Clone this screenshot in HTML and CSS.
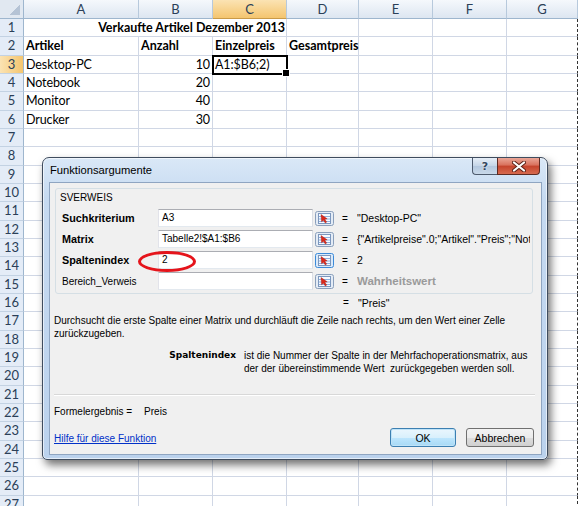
FILE: index.html
```html
<!DOCTYPE html>
<html lang="de">
<head>
<meta charset="utf-8">
<title>Funktionsargumente</title>
<link rel="stylesheet" href="styles.css">
</head>
<body>
<div class="sheet">
  <div class="corner"></div><div class="ch">A</div><div class="ch">B</div><div class="ch sel">C</div><div class="ch">D</div><div class="ch">E</div><div class="ch">F</div><div class="ch">G</div>

  <div class="rh">1</div><div class="c span3 r b">Verkaufte Artikel Dezember 2013</div><div class="c"></div><div class="c"></div><div class="c"></div><div class="c pb"></div>
  <div class="rh">2</div><div class="c b">Artikel</div><div class="c b">Anzahl</div><div class="c b">Einzelpreis</div><div class="c b">Gesamtpreis</div><div class="c"></div><div class="c"></div><div class="c pb"></div>
  <div class="rh sel">3</div><div class="c">Desktop-PC</div><div class="c r">10</div><div class="c active">A1:$B6;2)</div><div class="c"></div><div class="c"></div><div class="c"></div><div class="c pb"></div>
  <div class="rh">4</div><div class="c">Notebook</div><div class="c r">20</div><div class="c"></div><div class="c"></div><div class="c"></div><div class="c"></div><div class="c pb"></div>
  <div class="rh">5</div><div class="c">Monitor</div><div class="c r">40</div><div class="c"></div><div class="c"></div><div class="c"></div><div class="c"></div><div class="c pb"></div>
  <div class="rh">6</div><div class="c">Drucker</div><div class="c r">30</div><div class="c"></div><div class="c"></div><div class="c"></div><div class="c"></div><div class="c pb"></div>
  <div class="rh">7</div><div class="c"></div><div class="c"></div><div class="c"></div><div class="c"></div><div class="c"></div><div class="c"></div><div class="c pb"></div>
  <div class="rh">8</div><div class="c"></div><div class="c"></div><div class="c"></div><div class="c"></div><div class="c"></div><div class="c"></div><div class="c pb"></div>
  <div class="rh">9</div><div class="c"></div><div class="c"></div><div class="c"></div><div class="c"></div><div class="c"></div><div class="c"></div><div class="c pb"></div>
  <div class="rh">10</div><div class="c"></div><div class="c"></div><div class="c"></div><div class="c"></div><div class="c"></div><div class="c"></div><div class="c pb"></div>
  <div class="rh">11</div><div class="c"></div><div class="c"></div><div class="c"></div><div class="c"></div><div class="c"></div><div class="c"></div><div class="c pb"></div>
  <div class="rh">12</div><div class="c"></div><div class="c"></div><div class="c"></div><div class="c"></div><div class="c"></div><div class="c"></div><div class="c pb"></div>
  <div class="rh">13</div><div class="c"></div><div class="c"></div><div class="c"></div><div class="c"></div><div class="c"></div><div class="c"></div><div class="c pb"></div>
  <div class="rh">14</div><div class="c"></div><div class="c"></div><div class="c"></div><div class="c"></div><div class="c"></div><div class="c"></div><div class="c pb"></div>
  <div class="rh">15</div><div class="c"></div><div class="c"></div><div class="c"></div><div class="c"></div><div class="c"></div><div class="c"></div><div class="c pb"></div>
  <div class="rh">16</div><div class="c"></div><div class="c"></div><div class="c"></div><div class="c"></div><div class="c"></div><div class="c"></div><div class="c pb"></div>
  <div class="rh">17</div><div class="c"></div><div class="c"></div><div class="c"></div><div class="c"></div><div class="c"></div><div class="c"></div><div class="c pb"></div>
  <div class="rh">18</div><div class="c"></div><div class="c"></div><div class="c"></div><div class="c"></div><div class="c"></div><div class="c"></div><div class="c pb"></div>
  <div class="rh">19</div><div class="c"></div><div class="c"></div><div class="c"></div><div class="c"></div><div class="c"></div><div class="c"></div><div class="c pb"></div>
  <div class="rh">20</div><div class="c"></div><div class="c"></div><div class="c"></div><div class="c"></div><div class="c"></div><div class="c"></div><div class="c pb"></div>
  <div class="rh">21</div><div class="c"></div><div class="c"></div><div class="c"></div><div class="c"></div><div class="c"></div><div class="c"></div><div class="c pb"></div>
  <div class="rh">22</div><div class="c"></div><div class="c"></div><div class="c"></div><div class="c"></div><div class="c"></div><div class="c"></div><div class="c pb"></div>
  <div class="rh">23</div><div class="c"></div><div class="c"></div><div class="c"></div><div class="c"></div><div class="c"></div><div class="c"></div><div class="c pb"></div>
  <div class="rh">24</div><div class="c"></div><div class="c"></div><div class="c"></div><div class="c"></div><div class="c"></div><div class="c"></div><div class="c pb"></div>
  <div class="rh">25</div><div class="c"></div><div class="c"></div><div class="c"></div><div class="c"></div><div class="c"></div><div class="c"></div><div class="c pb"></div>
  <div class="rh">26</div><div class="c"></div><div class="c"></div><div class="c"></div><div class="c"></div><div class="c"></div><div class="c"></div><div class="c pb"></div>
  <div class="rh">27</div><div class="c"></div><div class="c"></div><div class="c"></div><div class="c"></div><div class="c"></div><div class="c"></div><div class="c pb"></div>
</div>

<div class="dialog">
  <div class="titlebar">
    <span class="title">Funktionsargumente</span>
    <div class="capbtns">
      <span class="cap help">?</span>
      <span class="cap close"><svg width="14" height="11" viewBox="0 0 14 11"><path d="M2 1.5L12 9.5M12 1.5L2 9.5" stroke="#5a2118" stroke-width="4" stroke-linecap="round"/><path d="M2 1.5L12 9.5M12 1.5L2 9.5" stroke="#fff" stroke-width="2.2" stroke-linecap="round"/></svg></span>
    </div>
  </div>
  <div class="client">
    <div class="group">
      <div class="gtitle">SVERWEIS</div>
      <div class="arg">
        <span class="alabel b">Suchkriterium</span>
        <span class="input">A3</span>
        <span class="refbtn"><svg width="19" height="15" viewBox="0 0 19 15"><rect x="0.5" y="0.5" width="18" height="14" rx="2" fill="#e4ecf6" stroke="#8a9fbb"/><rect x="3.5" y="2.5" width="12" height="10" fill="#f7faff" stroke="#7c97bd"/><path d="M4 5.5h11M4 8h11M4 10.5h11" stroke="#8fb0dc"/><path d="M6 3.5l6.2 4.3-2.4.5 1.9 2.8-1.4.9-1.9-2.8-1.8 1.5z" fill="#db2a1c" stroke="#a01810" stroke-width="0.4"/></svg></span>
        <span class="eq">=</span>
        <span class="val">"Desktop-PC"</span>
      </div>
      <div class="arg">
        <span class="alabel b">Matrix</span>
        <span class="input">Tabelle2!$A1:$B6</span>
        <span class="refbtn"><svg width="19" height="15" viewBox="0 0 19 15"><rect x="0.5" y="0.5" width="18" height="14" rx="2" fill="#e4ecf6" stroke="#8a9fbb"/><rect x="3.5" y="2.5" width="12" height="10" fill="#f7faff" stroke="#7c97bd"/><path d="M4 5.5h11M4 8h11M4 10.5h11" stroke="#8fb0dc"/><path d="M6 3.5l6.2 4.3-2.4.5 1.9 2.8-1.4.9-1.9-2.8-1.8 1.5z" fill="#db2a1c" stroke="#a01810" stroke-width="0.4"/></svg></span>
        <span class="eq">=</span>
        <span class="val">{"Artikelpreise".0;"Artikel"."Preis";"Notebook".300;"Monitor".150}</span>
      </div>
      <div class="arg">
        <span class="alabel b">Spaltenindex</span>
        <span class="input">2</span>
        <span class="refbtn"><svg width="19" height="15" viewBox="0 0 19 15"><rect x="0.5" y="0.5" width="18" height="14" rx="2" fill="#d9eafb" stroke="#3c8ad8"/><rect x="3.5" y="2.5" width="12" height="10" fill="#f7faff" stroke="#7c97bd"/><path d="M4 5.5h11M4 8h11M4 10.5h11" stroke="#8fb0dc"/><path d="M6 3.5l6.2 4.3-2.4.5 1.9 2.8-1.4.9-1.9-2.8-1.8 1.5z" fill="#db2a1c" stroke="#a01810" stroke-width="0.4"/></svg></span>
        <span class="eq">=</span>
        <span class="val">2</span>
      </div>
      <div class="arg">
        <span class="alabel">Bereich_Verweis</span>
        <span class="input"></span>
        <span class="refbtn"><svg width="19" height="15" viewBox="0 0 19 15"><rect x="0.5" y="0.5" width="18" height="14" rx="2" fill="#e4ecf6" stroke="#8a9fbb"/><rect x="3.5" y="2.5" width="12" height="10" fill="#f7faff" stroke="#7c97bd"/><path d="M4 5.5h11M4 8h11M4 10.5h11" stroke="#8fb0dc"/><path d="M6 3.5l6.2 4.3-2.4.5 1.9 2.8-1.4.9-1.9-2.8-1.8 1.5z" fill="#db2a1c" stroke="#a01810" stroke-width="0.4"/></svg></span>
        <span class="eq">=</span>
        <span class="val muted">Wahrheitswert</span>
      </div>
    </div>
    <div class="result"><span class="eq">=</span><span class="val">"Preis"</span></div>
    <p class="desc">Durchsucht die erste Spalte einer Matrix und durchläuft die Zeile nach rechts, um den Wert einer Zelle<br>zurückzugeben.</p>
    <div class="argdesc">
      <span class="adname">Spaltenindex</span>
      <span class="adtext">ist die Nummer der Spalte in der Mehrfachoperationsmatrix, aus<br>der der übereinstimmende Wert&nbsp; zurückgegeben werden soll.</span>
    </div>
    <div class="sep"></div>
    <div class="formel"><span>Formelergebnis =</span><span class="fval">Preis</span></div>
    <div class="footer">
      <a class="help-link" href="#">Hilfe für diese Funktion</a>
      <div class="buttons">
        <button class="btn default">OK</button>
        <button class="btn">Abbrechen</button>
      </div>
    </div>
  </div>
  <div class="mark"></div>
</div>
</body>
</html>
```
FILE: styles.css
```css
* { box-sizing: border-box; }
html, body { margin: 0; padding: 0; }
body {
  width: 580px;
  height: 506px;
  overflow: hidden;
  background: #fff;
  position: relative;
  font-family: "Lato", "Liberation Sans", sans-serif;
}

/* ---------- spreadsheet ---------- */
.sheet {
  display: grid;
  grid-template-columns: 24px 115px 74px 74px 72px 74px 74px 71px;
  grid-template-rows: 19px repeat(27, 18.33px);
  width: 578px;
}
.corner {
  background: linear-gradient(135deg, transparent 55%, #b5c3d5 55%) no-repeat right 3px bottom 3px / 12px 12px, #e1e8f1;
  border-right: 1px solid #9eb6ce;
  border-bottom: 1px solid #9eb6ce;
}
.ch {
  background: linear-gradient(#f5f8fc, #dde6f1);
  border-right: 1px solid #b7c9dc;
  border-bottom: 1px solid #9eb6ce;
  color: #2b3f58;
  font-size: 13px;
  line-height: 18px;
  text-align: center;
}
.ch.sel { background: linear-gradient(#fbe3b3, #f4c56f); border-bottom-color: #c99a48; }
.rh {
  background: #e4ecf7;
  border-right: 1px solid #9eb6ce;
  border-bottom: 1px solid #c3d2e3;
  color: #2b3f58;
  font-size: 13px;
  line-height: 17px;
  text-align: center;
}
.rh.sel { background: linear-gradient(90deg, #fbe3b3, #f4c56f); }
.c {
  border-right: 1px solid #d0d7e5;
  border-bottom: 1px solid #d0d7e5;
  font-size: 12.5px;
  letter-spacing: -0.1px;
  line-height: 17px;
  color: #000;
  padding: 0 2px;
  white-space: nowrap;
}
.c.b { font-weight: bold; letter-spacing: 0; }
.c.r { text-align: right; }
.c.span3 { grid-column: span 3; padding-right: 1px; }
.c.pb { border-right: 1px dashed #333; }
.c.active {
  position: relative;
  outline: 2px solid #000;
  outline-offset: -1px;
}
.c.active::after {
  content: "";
  position: absolute;
  right: -4px;
  bottom: -4px;
  width: 6px;
  height: 6px;
  background: #000;
  border: 1px solid #fff;
}

/* ---------- dialog ---------- */
.dialog {
  position: absolute;
  left: 42px;
  top: 157px;
  width: 506px;
  border: 1px solid #3f4c5e;
  border-radius: 7px 7px 5px 5px;
  background: linear-gradient(#dae8f7 0, #c6daf1 40px, #bbd2ed 100%);
  box-shadow: 3px 5px 9px rgba(0, 0, 0, 0.55), inset 0 0 0 1px rgba(255, 255, 255, 0.6);
  padding: 0 5px 4px 6px;
  display: flex;
  flex-direction: column;
  font-family: "Liberation Sans", Arial, sans-serif;
  font-size: 10px;
  color: #000;
}
.titlebar {
  height: 24px;
  display: flex;
  justify-content: space-between;
  align-items: flex-start;
}
.title {
  font-size: 11.2px;
  line-height: 24px;
  padding-left: 1px;
}
.capbtns { display: flex; margin-right: 2px; }
.cap {
  height: 17px;
  display: flex;
  align-items: center;
  justify-content: center;
  border: 1px solid #4d5a6d;
  border-top: none;
}
.cap.help {
  width: 25px;
  border-right: none;
  border-radius: 0 0 0 4px;
  background: linear-gradient(#e6eef7, #c5d5e7 50%, #b3c7de 51%, #c9d9ea);
  color: #33465f;
  font: bold 11px "DejaVu Sans", sans-serif;
  text-shadow: 0 0 2px #fff;
}
.cap.close {
  width: 43px;
  border-radius: 0 0 4px 0;
  border-color: #5e2a22;
  background: linear-gradient(#eba697, #d9705c 45%, #c5432c 50%, #d66a4f 100%);
}
.client {
  background: #f0f0f0;
  border: 1px solid #8fa5c1;
  padding: 5px 7px 7px 4px;
  display: flex;
  flex-direction: column;
}
.group {
  margin-left: 1px;
  margin-right: 1px;
  border: 1px solid #d5dfe5;
  border-radius: 3px;
  padding: 3px 2px 3px 6px;
  height: 106px;
}
.gtitle {
  line-height: 12px;
  height: 12px;
  margin-left: -2px;
  margin-bottom: 5px;
}
.arg {
  display: flex;
  align-items: center;
  height: 18px;
  margin-bottom: 3px;
}
.alabel { width: 96px; flex: none; }
.alabel.b { font-weight: bold; font-size: 10.8px; }
.input {
  width: 155px;
  height: 18px;
  flex: none;
  background: #fff;
  border: 1px solid #abadb3;
  border-color: #abadb3 #dbdfe6 #e3e9ef #e2e3ea;
  padding: 0 3px;
  line-height: 16px;
}
.refbtn { width: 19px; height: 15px; margin-left: 2px; flex: none; display: flex; }
.eq { width: 15px; margin-left: 8px; flex: none; }
.val { flex: 1; min-width: 0; overflow: hidden; white-space: nowrap; font-size: 10.5px; }
.muted { color: #9a9a9a; font-weight: bold; font-size: 11.5px; }
.result {
  display: flex;
  margin-top: 3px;
  line-height: 12px;
  padding-left: 289px;
}
.result .eq { margin-left: 0; }
.desc {
  margin: 4.5px 0 0;
  line-height: 13px;
}
.argdesc {
  display: flex;
  margin-top: 9px;
  line-height: 13px;
  gap: 8px;
}
.adname {
  width: 182px;
  flex: none;
  text-align: right;
  font: bold 9px "DejaVu Sans", sans-serif;
  line-height: 13px;
}
.adtext { white-space: nowrap; }
.sep {
  margin-top: 19.5px;
  height: 1px;
  background: #d8d8d8;
  box-shadow: 0 1px 0 #fff;
  margin-right: -1px;
}
.formel {
  margin-top: 11px;
  line-height: 12px;
  display: flex;
}
.fval { margin-left: 12px; }
.footer {
  margin-top: 10px;
  display: flex;
  justify-content: space-between;
  align-items: flex-end;
  height: 19px;
}
.help-link {
  color: #0030c8;
  text-decoration: underline;
  line-height: 12px;
  margin-bottom: 2px;
}
.buttons { display: flex; gap: 10px; }
.btn {
  height: 19px;
  border: 1px solid #707070;
  border-radius: 3px;
  background: linear-gradient(#f3f3f3, #ebebeb 50%, #dddddd 51%, #d0d0d0);
  font: 10.5px "Liberation Sans", Arial, sans-serif;
  color: #000;
  padding: 0;
  width: 68px;
}
.btn.default {
  width: 66px;
  border-color: #3c7fb1;
  box-shadow: inset 0 0 0 1px #bfe3f8;
  background: linear-gradient(#eaf6fd, #d9f0fc 50%, #bee6fd 51%, #a7d9f5);
}
.mark {
  position: absolute;
  left: 95px;
  top: 93px;
  width: 58px;
  height: 21px;
  border: 3px solid #e5141b;
  border-radius: 50%;
}
```
